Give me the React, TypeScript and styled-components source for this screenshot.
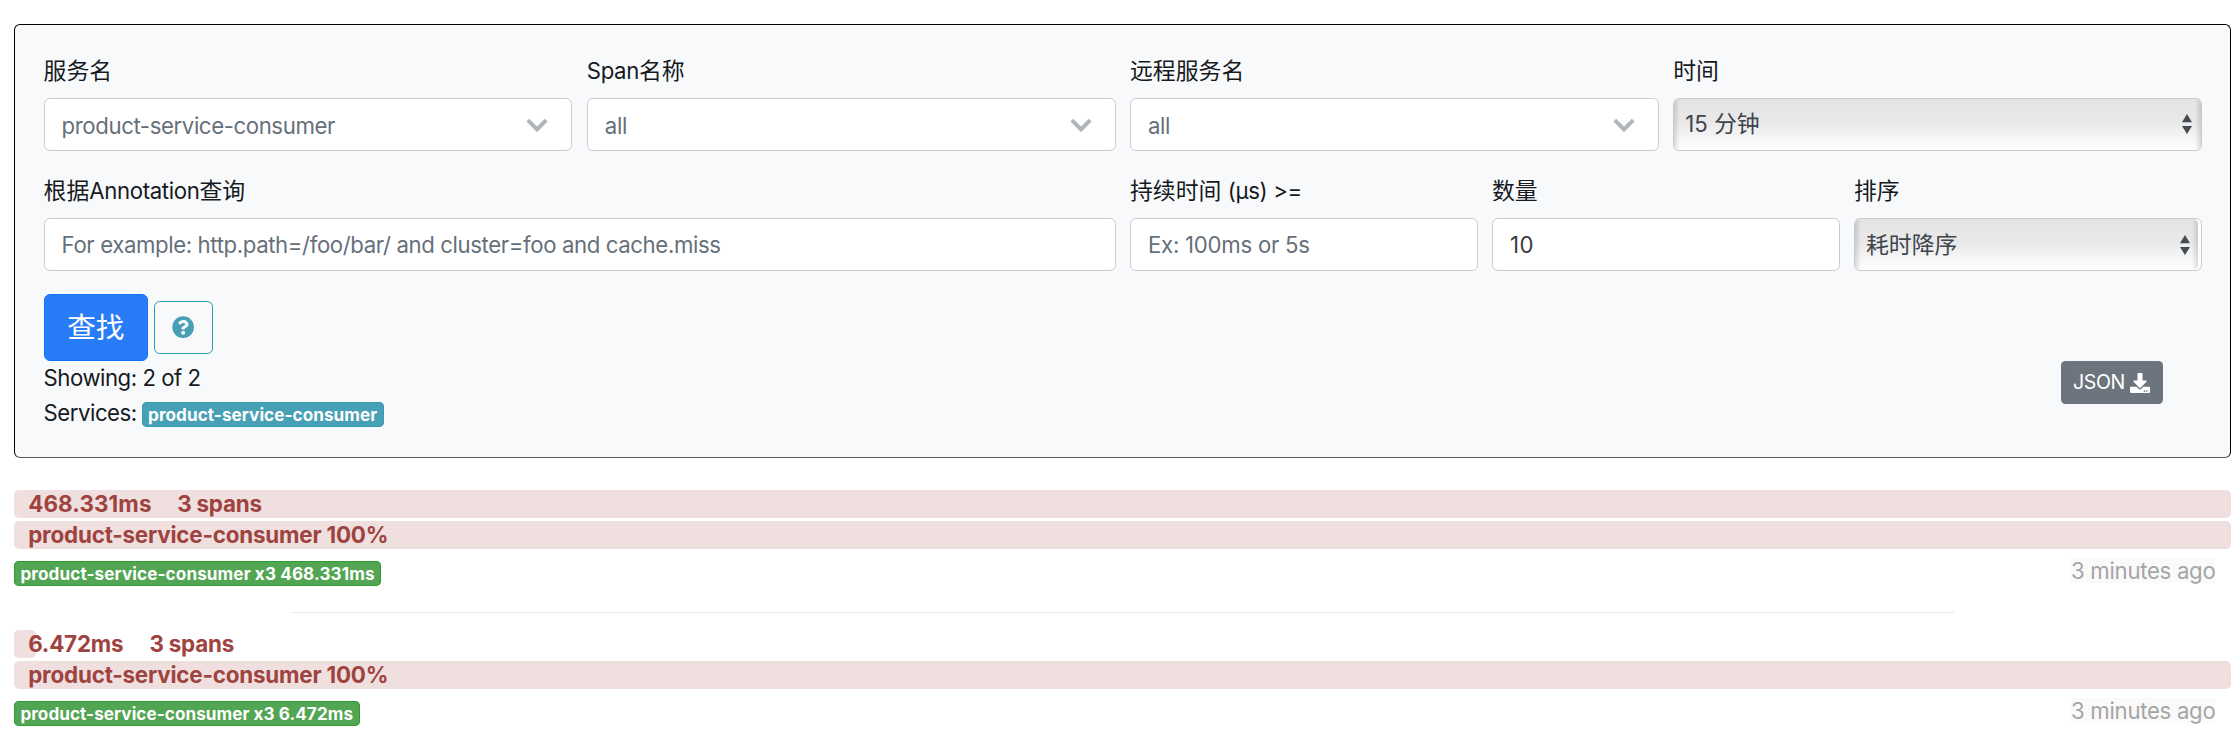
import React from "react";
import styled, { createGlobalStyle } from "styled-components";
import { FaDownload, FaQuestionCircle } from "react-icons/fa";

const GlobalStyle = createGlobalStyle`
  *, *::before, *::after { box-sizing: border-box; }
  body {
    margin: 0;
    background: #fff;
    color: #16191d;
    font-family: Inter, "Noto Sans CJK SC", sans-serif;
    font-size: 22.86px;
    line-height: 34.3px;
  }
`;

const Page = styled.main`
  display: flex;
  flex-direction: column;
  width: 2217px;
  margin: 24px 0 0 14px;
`;

const SearchPanel = styled.section`
  height: 434px;
  margin-bottom: 32px;
  padding: 28.4px 28px 0 28.6px;
  background: #f8f9fb;
  border: 1px solid #000;
  border-bottom-color: #55585c;
  border-radius: 6px;
`;

const FormRow = styled.div`
  display: flex;
  gap: 14.3px;
  height: 120.3px;
`;

const Field = styled.div<{ $width: number }>`
  flex: 0 0 ${(p) => p.$width}px;
`;

const Label = styled.label`
  display: block;
  height: 34.3px;
  margin-bottom: 10.3px;
  padding-top: 0.6px;
  white-space: nowrap;
`;

const Latin = styled.span<{ $track?: number }>`
  font-size: 22.2px;
  letter-spacing: ${(p) => p.$track ?? -0.35}px;
`;

const Control = styled.div<{ $filled?: boolean; $drop?: number }>`
  display: flex;
  align-items: center;
  justify-content: space-between;
  height: 53px;
  padding: ${(p) => p.$drop ?? 1.4}px 22px 0 17px;
  background: #fff;
  border: 1.4px solid #c6ccd3;
  border-radius: 5.7px;
  color: ${(p) => (p.$filled ? "#343b42" : "#66707a")};
  white-space: nowrap;
`;

const SelectFrame = styled.div<{ $inset: number }>`
  height: 53px;
  padding-right: ${(p) => p.$inset}px;
  background: #fff;
  border: 1.4px solid #c6ccd3;
  border-radius: 5.7px;
`;

const SelectFace = styled.div<{ $arrowGap: number }>`
  display: flex;
  align-items: center;
  justify-content: space-between;
  height: 100%;
  padding: 0 ${(p) => p.$arrowGap}px 0 11px;
  border-radius: 5px;
  color: #3d454d;
  background:
    linear-gradient(to right, rgba(0, 0, 0, 0.13), transparent 6px),
    linear-gradient(to left, rgba(0, 0, 0, 0.13), transparent 6px),
    linear-gradient(#e4e4e4, #e9e9e9 45%, #f3f3f3 70%, #fff);
`;

const Buttons = styled.div`
  display: flex;
  align-items: center;
  gap: 6px;
  height: 67px;
`;

const SearchButton = styled.button`
  width: 104.3px;
  height: 67px;
  padding: 1px 0 0;
  background: #297cf7;
  border: 1.4px solid #0f73fa;
  border-radius: 6px;
  color: #fff;
  font: 400 28.57px/1 Inter, "Noto Sans CJK SC", sans-serif;
`;

const HelpButton = styled.button`
  display: flex;
  align-items: center;
  justify-content: center;
  width: 58.7px;
  height: 53px;
  padding: 0;
  background: transparent;
  border: 1.4px solid #2d9aaf;
  border-radius: 5.7px;
  color: #469fb5;
  font-size: 22.3px;
`;

const Summary = styled.div`
  display: flex;
  align-items: flex-start;
  justify-content: space-between;
  padding-right: 39.3px;
`;

const SummaryLine = styled.div`
  display: flex;
  align-items: flex-start;
  height: 34.3px;
  padding-top: 0.4px;
`;

const Badge = styled.span<{ $tone: "info" | "success"; $track: number; $width: number }>`
  display: block;
  width: ${(p) => p.$width}px;
  height: 25.3px;
  padding-left: 6.4px;
  border-radius: 5px;
  background: ${(p) => (p.$tone === "info" ? "#46a0b6" : "#52a552")};
  box-shadow: inset 0 0 0 1px ${(p) => (p.$tone === "info" ? "#389bb0" : "#2f9c30")};
  color: #fff;
  font-size: 17.14px;
  font-weight: 700;
  line-height: 25px;
  letter-spacing: ${(p) => p.$track}px;
  white-space: nowrap;
`;

const ServiceBadge = styled(Badge)`
  margin: 6px 0 0 5px;
`;

const JsonButton = styled.button`
  display: flex;
  align-items: center;
  gap: 5.5px;
  width: 101.7px;
  height: 43.3px;
  padding: 1px 0 0 12px;
  background: #6c757d;
  border: 0;
  border-radius: 4.5px;
  color: #fff;
  font: 400 19.6px/1 Inter, sans-serif;
  letter-spacing: -0.4px;

  svg { flex: none; width: 20px; height: 20px; }
`;

const Trace = styled.article`
  height: 96.7px;
`;

const Bar = styled.div<{ $share: number }>`
  position: relative;
  isolation: isolate;
  height: 27.8px;
  margin-bottom: 3.2px;
  padding-left: 14.2px;
  color: #9f433f;

  &::before {
    content: "";
    position: absolute;
    z-index: -1;
    inset: 0 auto 0 0;
    width: ${(p) => p.$share}%;
    border-radius: 5px;
    background: #efdfdf;
  }
`;

const BarText = styled.span<{ $track?: number; $offset?: number }>`
  display: inline-block;
  height: 27.8px;
  margin-left: ${(p) => p.$offset ?? 0}px;
  vertical-align: top;
  font-size: 22.4px;
  font-weight: 700;
  line-height: 28.8px;
  letter-spacing: ${(p) => p.$track ?? -0.2}px;
  white-space: nowrap;
`;

const TraceFooter = styled.div`
  display: flex;
  justify-content: space-between;
  padding: 6.2px 15.6px 0 0;
`;

const TraceBadge = styled(Badge)`
  margin-top: 2.6px;
`;

const Age = styled.span`
  height: 25.3px;
  padding-left: 0.5px;
  background: #fafafa;
  color: #a5a5a5;
  font-size: 22.2px;
  line-height: 26.6px;
  letter-spacing: -0.3px;
`;

const Divider = styled.hr`
  width: 1663px;
  height: 1.4px;
  margin: 25px auto 16.9px;
  border: 0;
  background: #e9e9e9;
`;

const Chevron = () => (
  <svg width="23" height="15" viewBox="0 0 23 15" fill="none">
    <path d="M1.8 2.2 L11 11.4 L20.2 2.2" stroke="#adb5bd" strokeWidth="4" />
  </svg>
);

const Arrows = () => (
  <svg width="10" height="20" viewBox="0 0 10 20" fill="#434b54">
    <path d="M5 0 L10 8.2 H0 Z M0 12 H10 L5 20 Z" />
  </svg>
);

interface TraceInfo {
  duration: string;
  share: number;
  titleTrack: number;
  spansGap: number;
  badgeWidth: number;
  badgeTrack: number;
}

const traces: TraceInfo[] = [
  { duration: "468.331ms", share: 100, titleTrack: 0.12, spansGap: 25.6, badgeWidth: 366.5, badgeTrack: 0.1 },
  { duration: "6.472ms", share: 1, titleTrack: -0.2, spansGap: 26, badgeWidth: 345.5, badgeTrack: 0.05 },
];

export default function App() {
  return (
    <>
      <GlobalStyle />
      <Page>
        <SearchPanel>
          <FormRow>
            <Field $width={528.9}>
              <Label>服务名</Label>
              <Control $drop={3}>
                <Latin $track={-0.4}>product-service-consumer</Latin>
                <Chevron />
              </Control>
            </Field>
            <Field $width={528.9}>
              <Label><Latin>Span</Latin>名称</Label>
              <Control $drop={3}><Latin>all</Latin><Chevron /></Control>
            </Field>
            <Field $width={528.9}>
              <Label>远程服务名</Label>
              <Control $drop={3}><Latin>all</Latin><Chevron /></Control>
            </Field>
            <Field $width={528.9}>
              <Label>时间</Label>
              <SelectFrame $inset={0}>
                <SelectFace $arrowGap={9}>
                  <span><Latin $track={0}>15 </Latin>分钟</span>
                  <Arrows />
                </SelectFace>
              </SelectFrame>
            </Field>
          </FormRow>
          <FormRow>
            <Field $width={1072.1}>
              <Label>根据<Latin $track={-0.35}>Annotation</Latin>查询</Label>
              <Control>
                <Latin $track={-0.39}>For example: http.path=/foo/bar/ and cluster=foo and cache.miss</Latin>
              </Control>
            </Field>
            <Field $width={347.7}>
              <Label>持续时间 <Latin>(μs) &gt;=</Latin></Label>
              <Control><Latin $track={-0.25}>Ex: 100ms or 5s</Latin></Control>
            </Field>
            <Field $width={347.7}>
              <Label>数量</Label>
              <Control $filled><Latin $track={0.4}>10</Latin></Control>
            </Field>
            <Field $width={347.7}>
              <Label>排序</Label>
              <SelectFrame $inset={2.4}>
                <SelectFace $arrowGap={8}>
                  <span>耗时降序</span>
                  <Arrows />
                </SelectFace>
              </SelectFrame>
            </Field>
          </FormRow>
          <Buttons>
            <SearchButton>查找</SearchButton>
            <HelpButton><FaQuestionCircle /></HelpButton>
          </Buttons>
          <Summary>
            <div>
              <SummaryLine><Latin $track={-0.48}>Showing: 2 of 2</Latin></SummaryLine>
              <SummaryLine>
                <Latin $track={-0.48}>Services:</Latin>
                <ServiceBadge $tone="info" $track={0.05} $width={242}>product-service-consumer</ServiceBadge>
              </SummaryLine>
            </div>
            <JsonButton>JSON<FaDownload /></JsonButton>
          </Summary>
        </SearchPanel>
        {traces.map((t, i) => (
          <React.Fragment key={t.duration}>
            {i > 0 && <Divider />}
            <Trace>
              <Bar $share={t.share}>
                <BarText $track={t.titleTrack}>{t.duration}</BarText>
                <BarText $offset={t.spansGap}>3 spans</BarText>
              </Bar>
              <Bar $share={100}>
                <BarText>product-service-consumer 100%</BarText>
              </Bar>
              <TraceFooter>
                <TraceBadge $tone="success" $track={t.badgeTrack} $width={t.badgeWidth}>
                  product-service-consumer x3 {t.duration}
                </TraceBadge>
                <Age>3 minutes ago</Age>
              </TraceFooter>
            </Trace>
          </React.Fragment>
        ))}
      </Page>
    </>
  );
}
